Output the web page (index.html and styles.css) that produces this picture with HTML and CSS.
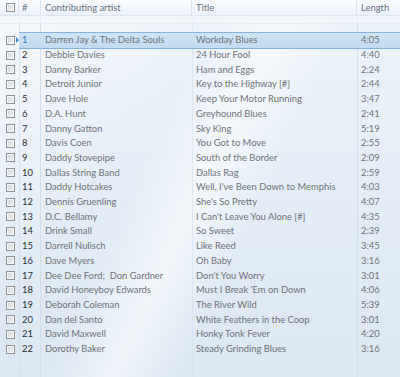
FILE: index.html
```html
<!DOCTYPE html>
<html>
<head>
<meta charset="utf-8">
<link rel="stylesheet" href="styles.css">
</head>
<body>
<div class="list">
  <div class="head row">
    <div class="c chk"><span class="box"></span></div>
    <div class="c num">#</div>
    <div class="c art">Contributing artist</div>
    <div class="c tit">Title</div>
    <div class="c len">Length</div>
  </div>
  <div class="spacer"></div>
  <div class="rows">
    <div class="row sel"><div class="c chk"><span class="box"></span><span class="focus"></span></div><div class="c num">1</div><div class="c art">Darren Jay &amp; The Delta Souls</div><div class="c tit">Workday Blues</div><div class="c len">4:05</div></div>
    <div class="row"><div class="c chk"><span class="box"></span></div><div class="c num">2</div><div class="c art">Debbie Davies</div><div class="c tit">24 Hour Fool</div><div class="c len">4:40</div></div>
    <div class="row"><div class="c chk"><span class="box"></span></div><div class="c num">3</div><div class="c art">Danny Barker</div><div class="c tit">Ham and Eggs</div><div class="c len">2:24</div></div>
    <div class="row"><div class="c chk"><span class="box"></span></div><div class="c num">4</div><div class="c art">Detroit Junior</div><div class="c tit">Key to the Highway [#]</div><div class="c len">2:44</div></div>
    <div class="row"><div class="c chk"><span class="box"></span></div><div class="c num">5</div><div class="c art">Dave Hole</div><div class="c tit">Keep Your Motor Running</div><div class="c len">3:47</div></div>
    <div class="row"><div class="c chk"><span class="box"></span></div><div class="c num">6</div><div class="c art">D.A. Hunt</div><div class="c tit">Greyhound Blues</div><div class="c len">2:41</div></div>
    <div class="row"><div class="c chk"><span class="box"></span></div><div class="c num">7</div><div class="c art">Danny Gatton</div><div class="c tit">Sky King</div><div class="c len">5:19</div></div>
    <div class="row"><div class="c chk"><span class="box"></span></div><div class="c num">8</div><div class="c art">Davis Coen</div><div class="c tit">You Got to Move</div><div class="c len">2:55</div></div>
    <div class="row"><div class="c chk"><span class="box"></span></div><div class="c num">9</div><div class="c art">Daddy Stovepipe</div><div class="c tit">South of the Border</div><div class="c len">2:09</div></div>
    <div class="row"><div class="c chk"><span class="box"></span></div><div class="c num">10</div><div class="c art">Dallas String Band</div><div class="c tit">Dallas Rag</div><div class="c len">2:59</div></div>
    <div class="row"><div class="c chk"><span class="box"></span></div><div class="c num">11</div><div class="c art">Daddy Hotcakes</div><div class="c tit">Well, I've Been Down to Memphis</div><div class="c len">4:03</div></div>
    <div class="row"><div class="c chk"><span class="box"></span></div><div class="c num">12</div><div class="c art">Dennis Gruenling</div><div class="c tit">She's So Pretty</div><div class="c len">4:07</div></div>
    <div class="row"><div class="c chk"><span class="box"></span></div><div class="c num">13</div><div class="c art">D.C. Bellamy</div><div class="c tit">I Can't Leave You Alone [#]</div><div class="c len">4:35</div></div>
    <div class="row"><div class="c chk"><span class="box"></span></div><div class="c num">14</div><div class="c art">Drink Small</div><div class="c tit">So Sweet</div><div class="c len">2:39</div></div>
    <div class="row"><div class="c chk"><span class="box"></span></div><div class="c num">15</div><div class="c art">Darrell Nulisch</div><div class="c tit">Like Reed</div><div class="c len">3:45</div></div>
    <div class="row"><div class="c chk"><span class="box"></span></div><div class="c num">16</div><div class="c art">Dave Myers</div><div class="c tit">Oh Baby</div><div class="c len">3:16</div></div>
    <div class="row"><div class="c chk"><span class="box"></span></div><div class="c num">17</div><div class="c art">Dee Dee Ford;&nbsp; Don Gardner</div><div class="c tit">Don't You Worry</div><div class="c len">3:01</div></div>
    <div class="row"><div class="c chk"><span class="box"></span></div><div class="c num">18</div><div class="c art">David Honeyboy Edwards</div><div class="c tit">Must I Break 'Em on Down</div><div class="c len">4:06</div></div>
    <div class="row"><div class="c chk"><span class="box"></span></div><div class="c num">19</div><div class="c art">Deborah Coleman</div><div class="c tit">The River Wild</div><div class="c len">5:39</div></div>
    <div class="row"><div class="c chk"><span class="box"></span></div><div class="c num">20</div><div class="c art">Dan del Santo</div><div class="c tit">White Feathers in the Coop</div><div class="c len">3:01</div></div>
    <div class="row"><div class="c chk"><span class="box"></span></div><div class="c num">21</div><div class="c art">David Maxwell</div><div class="c tit">Honky Tonk Fever</div><div class="c len">4:20</div></div>
    <div class="row"><div class="c chk"><span class="box"></span></div><div class="c num">22</div><div class="c art">Dorothy Baker</div><div class="c tit">Steady Grinding Blues</div><div class="c len">3:16</div></div>
  </div>
</div>
</body>
</html>
```

FILE: styles.css
```css
html, body {
  margin: 0;
  padding: 0;
  width: 400px;
  height: 377px;
  overflow: hidden;
}
body {
  font-family: Lato, "Noto Sans", sans-serif;
  font-size: 9.4px;
  color: #6e7378;
  background:
    linear-gradient(115deg, rgba(255,255,255,0) 38%, rgba(255,255,255,0.55) 50%, rgba(255,255,255,0) 62%),
    linear-gradient(130deg, rgba(255,255,255,0.55) 0%, rgba(255,255,255,0) 35%),
    linear-gradient(180deg, #edf3f9 0%, #e4edf6 50%, #dbe7f2 100%);
}
.list {
  height: 377px;
  display: flex;
  flex-direction: column;
  background:
    linear-gradient(90deg, transparent 19px, rgba(200,217,234,0.7) 19px, rgba(200,217,234,0.7) 20px, transparent 20px),
    linear-gradient(90deg, transparent 40px, #d1dfed 40px, #d1dfed 41px, transparent 41px),
    linear-gradient(90deg, transparent 192px, rgba(211,224,238,0.6) 192px, rgba(211,224,238,0.6) 193px, transparent 193px),
    linear-gradient(90deg, transparent 357px, #d1dfed 357px, #d1dfed 358px, transparent 358px);
}
.row {
  display: grid;
  grid-template-columns: 19px 22px 151px 165px 1fr;
  height: 14.714px;
  align-items: center;
  white-space: nowrap;
  position: relative;
}
.c {
  padding-left: 4px;
  line-height: 14px;
  overflow: hidden;
}
.chk {
  padding-left: 0;
  display: flex;
  align-items: center;
  height: 100%;
}
.box {
  display: block;
  width: 7px;
  height: 7px;
  margin-left: 6px;
  border: 1px solid #8f9396;
  background: linear-gradient(135deg, #d3d6d9 0%, #f2f3f4 100%);
  box-shadow: inset 0 0 0 1px #f5f6f7;
}
.num {
  color: #262d3a;
  padding-left: 3px;
}
.head {
  height: 16px;
  background: linear-gradient(180deg, #fbfdfe 0%, #f3f7fb 60%, #eaf1f8 100%);
  border-bottom: 1px solid #dde6ef;
  box-sizing: border-box;
  color: #68727e;
}
.head .c {
  height: 100%;
  line-height: 15px;
  border-right: 1px solid #dbe4ee;
  box-sizing: border-box;
}
.head .c.len {
  border-right: none;
}
.head .num {
  color: #68727e;
}
.spacer {
  height: 7px;
  border-bottom: 1px solid #e6edf5;
  background: rgba(244,247,251,0.6);
}
.rows {
  padding-top: 9px;
  display: flex;
  flex-direction: column;
}
.sel {
  background: linear-gradient(180deg, #cfe5f7 0%, #c1dbf1 100%);
  border-top: 1px solid #86b3dc;
  border-bottom: 1px solid #86b3dc;
  margin-left: 19px;
  grid-template-columns: 0 22px 151px 165px 1fr;
  box-sizing: content-box;
  margin-top: -1px;
  margin-bottom: -1px;
}
.sel .num {
  color: #2f6fb0;
}
.sel .chk {
  overflow: visible;
  margin-left: -19px;
  width: 19px;
}
.focus {
  display: block;
  width: 0;
  height: 0;
  border-top: 3px solid transparent;
  border-bottom: 3px solid transparent;
  border-left: 3px solid #3a86c8;
  margin-left: 1px;
}
```
